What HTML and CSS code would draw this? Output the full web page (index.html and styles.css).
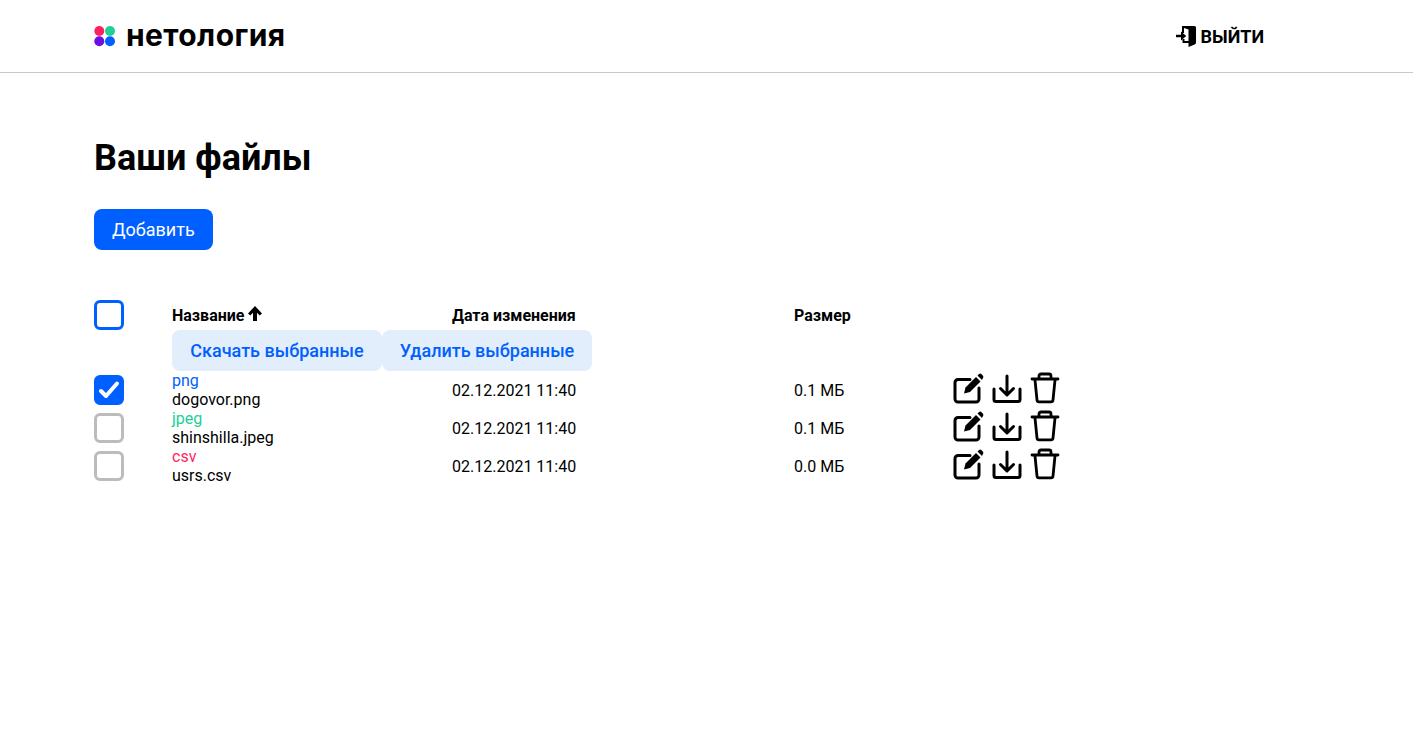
FILE: index.html

```html
<!DOCTYPE html>
<html lang="ru">
<head>
    <meta charset="UTF-8">
    <title>Нетология: ваши файлы</title>
    <link rel="stylesheet" href="styles.css">
</head>
<body>

    <header class="header">
        <a class="logo" href="#">
            <svg class="logo-mark" width="22" height="22" viewBox="0 0 22 22">
                <circle cx="5.300" cy="6" r="5" fill="#ff1f63"/>
                <circle cx="16" cy="6" r="5" fill="#20cf96"/>
                <circle cx="5.300" cy="16.200" r="5" fill="#6a0fe0"/>
                <circle cx="16" cy="16.200" r="5" fill="#0060ff"/>
            </svg>
            <span class="logo-text">нетология</span>
        </a>
        <a class="logout" href="#">
            <svg class="logout-icon" width="22" height="23" viewBox="0 0 22 23">
                <path d="M6 1h12.500A1.500 1.500 0 0 1 20 2.500v15a2 2 0 0 1-1.300 1.900L12.500 22v-4H6.500v-4h2v2h4V4.500L8 3v5H6z" fill="#000"/>
                <path d="M0 9.700h5V6.500l5.200 4.500L5 15.500v-3.200H0z" fill="#000"/>
            </svg>
            <span>ВЫЙТИ</span>
        </a>
    </header>

    <main class="content">
        <h1 class="title">Ваши файлы</h1>
        <button class="btn btn-primary">Добавить</button>

        <div class="files">
            <div class="row row-head">
                <span class="check check-head"></span>
                <span class="cell-name">Название
                    <svg class="sort-icon" width="14" height="15" viewBox="0 0 14 15"><path d="M7 0l7 7.500-2.300 2L9 6.800V15H5V6.800L2.300 9.500 0 7.500z" fill="#000"/></svg>
                </span>
                <span class="cell-date">Дата изменения</span>
                <span class="cell-size">Размер</span>
            </div>

            <div class="bulk">
                <button class="btn btn-light">Скачать выбранные</button>
                <button class="btn btn-light">Удалить выбранные</button>
            </div>

            <div class="row">
                <span class="check check-on">
                    <svg width="24" height="24" viewBox="0 0 24 24"><path d="M4 13l5 5L20 5.500" fill="none" stroke="#fff" stroke-width="4" stroke-linecap="round" stroke-linejoin="round"/></svg>
                </span>
                <div class="cell-name">
                    <div class="type type-png">png</div>
                    <div>dogovor.png</div>
                </div>
                <span class="cell-date">02.12.2021 11:40</span>
                <span class="cell-size">0.1 МБ</span>
                <div class="actions">
                    <svg class="icon" viewBox="0 0 32 32"><use href="#i-edit"/></svg>
                    <svg class="icon" viewBox="0 0 32 32"><use href="#i-down"/></svg>
                    <svg class="icon" viewBox="0 0 32 32"><use href="#i-trash"/></svg>
                </div>
            </div>

            <div class="row">
                <span class="check"></span>
                <div class="cell-name">
                    <div class="type type-jpeg">jpeg</div>
                    <div>shinshilla.jpeg</div>
                </div>
                <span class="cell-date">02.12.2021 11:40</span>
                <span class="cell-size">0.1 МБ</span>
                <div class="actions">
                    <svg class="icon" viewBox="0 0 32 32"><use href="#i-edit"/></svg>
                    <svg class="icon" viewBox="0 0 32 32"><use href="#i-down"/></svg>
                    <svg class="icon" viewBox="0 0 32 32"><use href="#i-trash"/></svg>
                </div>
            </div>

            <div class="row">
                <span class="check"></span>
                <div class="cell-name">
                    <div class="type type-csv">csv</div>
                    <div>usrs.csv</div>
                </div>
                <span class="cell-date">02.12.2021 11:40</span>
                <span class="cell-size">0.0 МБ</span>
                <div class="actions">
                    <svg class="icon" viewBox="0 0 32 32"><use href="#i-edit"/></svg>
                    <svg class="icon" viewBox="0 0 32 32"><use href="#i-down"/></svg>
                    <svg class="icon" viewBox="0 0 32 32"><use href="#i-trash"/></svg>
                </div>
            </div>
        </div>
    </main>

    <svg class="sprite" width="0" height="0">
        <symbol id="i-edit" viewBox="0 0 32 32">
            <path d="M17 7.500H5a3 3 0 0 0-3 3V27a3 3 0 0 0 3 3h18a3 3 0 0 0 3-3V16" fill="none" stroke="#000" stroke-width="3" stroke-linecap="round"/>
            <path d="M11 21.500l1.500-6L23 5l4.500 4.500L17 20z" fill="#000"/>
            <path d="M24.500 3.500l1.300-1.300a2 2 0 0 1 2.800 0l1.200 1.200a2 2 0 0 1 0 2.800L29 8z" fill="#000"/>
        </symbol>
        <symbol id="i-down" viewBox="0 0 32 32">
            <path d="M3 17v10.500A2 2 0 0 0 5 29.500h22a2 2 0 0 0 2-2V17" fill="none" stroke="#000" stroke-width="3" stroke-linecap="round"/>
            <path d="M16 4v18.500M9.500 16.500l6.500 6.500 6.500-6.500" fill="none" stroke="#000" stroke-width="3" stroke-linecap="round" stroke-linejoin="round"/>
        </symbol>
        <symbol id="i-trash" viewBox="0 0 32 32">
            <path d="M3 7h26M10 6.500V4a2 2 0 0 1 2-2h8a2 2 0 0 1 2 2v2.500" fill="none" stroke="#000" stroke-width="2.800" stroke-linecap="round"/>
            <path d="M6 8l2 20a2 2 0 0 0 2 1.800h12a2 2 0 0 0 2-1.800L26 8" fill="none" stroke="#000" stroke-width="2.800" stroke-linecap="round"/>
        </symbol>
    </svg>

</body>
</html>
```

FILE: styles.css

```css
body {
    font-family: Roboto, Arial, sans-serif;
    margin: 0;
    padding: 0;
    background: #fff;
    color: #000;
}
.header {
    display: flex;
    justify-content: space-between;
    align-items: center;
    height: 72px;
    padding: 0 149px 0 94px;
    border-bottom: 1px solid #c8c8c8;
}
.logo {
    display: flex;
    align-items: center;
    gap: 10px;
    color: #000;
    text-decoration: none;
}
.logo-mark {
    margin-bottom: 1px;
}
.logo-text {
    padding-bottom: 3px;
    font-family: Inter, Arial, sans-serif;
    font-size: 30px;
    font-weight: 700;
    line-height: 36px;
    letter-spacing: 0.4px;
}
.logout {
    display: flex;
    align-items: center;
    gap: 3px;
    color: #000;
    font-size: 18px;
    font-weight: 700;
    text-decoration: none;
}
.logout-icon {
    margin-top: 1px;
}
.content {
    padding: 62px 94px 0;
}
.title {
    margin: 0 0 28px;
    font-size: 36px;
    font-weight: 700;
    line-height: 46px;
}
.btn {
    height: 41px;
    padding: 0 18px;
    border: none;
    border-radius: 8px;
    font-family: Roboto, Arial, sans-serif;
    font-size: 18px;
    cursor: pointer;
}
.btn-primary {
    background: #0060ff;
    color: #fff;
}
.btn-light {
    width: 210px;
    padding: 0;
    background: #e2eefb;
    color: #0060ff;
    font-weight: 500;
}
.files {
    margin-top: 50px;
    font-size: 16px;
}
.row {
    display: grid;
    grid-template-columns: 78px 280px 342px 159px auto;
    align-items: center;
    height: 38px;
    line-height: 19px;
}
.row-head {
    height: 30px;
    font-weight: 700;
}
.sort-icon {
    vertical-align: 0;
}
.bulk {
    display: flex;
    height: 41px;
    padding-left: 78px;
}
.check {
    display: flex;
    align-items: center;
    justify-content: center;
    box-sizing: border-box;
    width: 30px;
    height: 30px;
    border: 3px solid #bcbcbc;
    border-radius: 6px;
}
.check-head {
    border-color: #0060ff;
}
.check-on {
    border-color: #0060ff;
    background: #0060ff;
}
.type-png {
    color: #0060ff;
}
.type-jpeg {
    color: #20cf96;
}
.type-csv {
    color: #ff1f63;
}
.actions {
    display: flex;
    gap: 6px;
    margin-top: -4px;
}
.icon {
    width: 32px;
    height: 32px;
}
.sprite {
    position: absolute;
}
```
